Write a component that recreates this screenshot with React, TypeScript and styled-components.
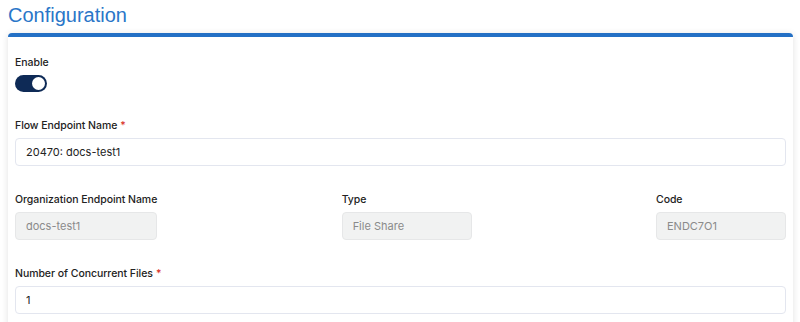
import React from "react";
import styled, { createGlobalStyle } from "styled-components";

const Global = createGlobalStyle`
  html, body { margin: 0; padding: 0; background: #ffffff; }
  body { font-family: "Inter", "Liberation Sans", sans-serif; color: #222; }
  * { box-sizing: border-box; }
`;

const Page = styled.div`
  padding: 0 7px 0 8px;
`;

const Title = styled.h1`
  margin: 0;
  padding-top: 3px;
  height: 33px;
  font-family: "Liberation Sans", Arial, sans-serif;
  font-weight: 400;
  font-size: 20px;
  line-height: 24px;
  color: #2a76c8;
`;

const Card = styled.section`
  background: #fff;
  border-top: 4px solid #2470c5;
  border-radius: 4px 4px 0 0;
  box-shadow: 0 1px 7px rgba(0, 0, 0, 0.12);
  padding: 18px 7px 30px 7px;
  display: flex;
  flex-direction: column;
  gap: 26px;
`;

const Field = styled.div`
  display: flex;
  flex-direction: column;
`;

const Row = styled.div`
  display: flex;
  justify-content: space-between;
`;

const Label = styled.label`
  display: block;
  font-size: 10.5px;
  line-height: 15px;
  font-weight: 500;
  letter-spacing: -0.05px;
  color: #222;
  margin-bottom: 5px;
  white-space: nowrap;
`;

const Req = styled.span`
  color: #d9342b;
  margin-left: 3px;
`;

const Input = styled.input<{ $disabled?: boolean }>`
  display: block;
  width: 100%;
  min-width: 130px;
  height: 28px;
  padding: 0 10px;
  border: 1px solid ${(p) => (p.$disabled ? "#e6e7e8" : "#e3e6ef")};
  border-radius: 4px;
  background: ${(p) => (p.$disabled ? "#f1f2f2" : "#fff")};
  color: ${(p) => (p.$disabled ? "#8a8a8a" : "#222")};
  font-family: "Inter", "Liberation Sans", sans-serif;
  font-size: 11px;
  outline: none;
  &:disabled { -webkit-text-fill-color: #8a8a8a; opacity: 1; }
`;

const Toggle = styled.span<{ $on: boolean }>`
  position: relative;
  display: inline-block;
  width: 32px;
  height: 17px;
  border-radius: 9px;
  background: ${(p) => (p.$on ? "#0e2a56" : "#ccc")};
  &::after {
    content: "";
    position: absolute;
    top: 2px;
    left: ${(p) => (p.$on ? "17px" : "2px")};
    width: 13px;
    height: 13px;
    border-radius: 50%;
    background: #fff;
  }
`;

export default function App() {
  return (
    <>
      <Global />
      <Page>
        <Title>Configuration</Title>
        <Card>
          <Field>
            <Label>Enable</Label>
            <Toggle $on />
          </Field>
          <Field>
            <Label>
              Flow Endpoint Name<Req>*</Req>
            </Label>
            <Input defaultValue="20470: docs-test1" />
          </Field>
          <Row>
            <Field>
              <Label>Organization Endpoint Name</Label>
              <Input $disabled disabled size={1} defaultValue="docs-test1" />
            </Field>
            <Field>
              <Label>Type</Label>
              <Input $disabled disabled size={1} defaultValue="File Share" />
            </Field>
            <Field>
              <Label>Code</Label>
              <Input $disabled disabled size={1} defaultValue="ENDC7O1" />
            </Field>
          </Row>
          <Field>
            <Label>
              Number of Concurrent Files<Req>*</Req>
            </Label>
            <Input defaultValue="1" />
          </Field>
        </Card>
      </Page>
    </>
  );
}
